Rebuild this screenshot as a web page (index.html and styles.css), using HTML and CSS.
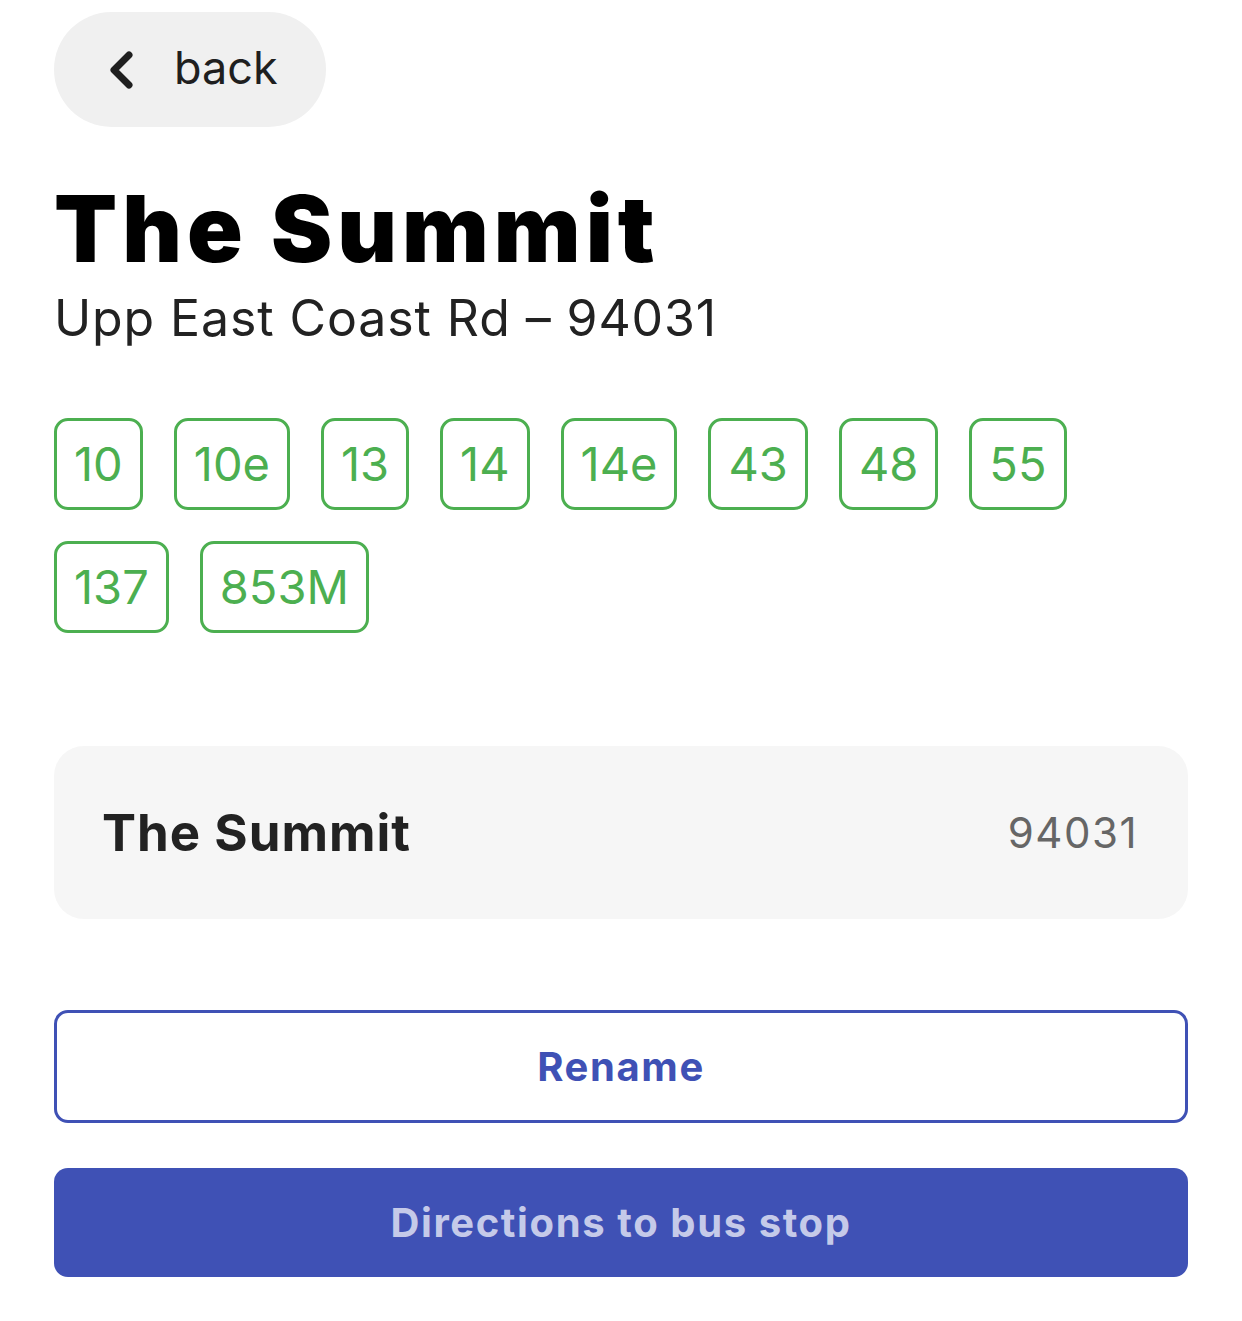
FILE: index.html
```html
<!DOCTYPE html>
<html lang="en">
<head>
<meta charset="utf-8">
<title>The Summit</title>
<link rel="stylesheet" href="styles.css">
</head>
<body>
<main class="page">
  <button class="back">
    <svg class="back-icon" width="26" height="38" viewBox="0 0 26 38" aria-hidden="true">
      <path d="M21 4 L6 19 L21 34" fill="none" stroke="#1f1f1f" stroke-width="7" stroke-linecap="round" stroke-linejoin="round"/>
    </svg>
    <span class="back-label">back</span>
  </button>

  <h1 class="title">The Summit</h1>
  <p class="subtitle">Upp East Coast Rd – 94031</p>

  <ul class="services">
    <li class="chip">10</li>
    <li class="chip">10e</li>
    <li class="chip">13</li>
    <li class="chip">14</li>
    <li class="chip">14e</li>
    <li class="chip">43</li>
    <li class="chip">48</li>
    <li class="chip">55</li>
    <li class="chip">137</li>
    <li class="chip">853M</li>
  </ul>

  <section class="card">
    <span class="card-name">The Summit</span>
    <span class="card-code">94031</span>
  </section>

  <button class="btn btn-outline">Rename</button>
  <button class="btn btn-solid">Directions to bus stop</button>
</main>
</body>
</html>
```

FILE: styles.css
```css
* { box-sizing: border-box; }

html, body {
  margin: 0;
  padding: 0;
  background: #ffffff;
}

body {
  font-family: Inter, "Noto Sans", "Liberation Sans", sans-serif;
  color: #222222;
}

.page {
  padding: 12px 54px 40px;
  display: flex;
  flex-direction: column;
  align-items: stretch;
}

.back {
  align-self: flex-start;
  display: flex;
  align-items: center;
  gap: 40px;
  height: 115px;
  width: 272px;
  padding: 0 0 0 54px;
  border: none;
  border-radius: 58px;
  background: #f0f0f0;
  font-family: inherit;
  cursor: pointer;
}

.back-icon { display: block; }

.back-label {
  font-size: 45px;
  font-weight: 400;
  color: #1f1f1f;
  line-height: 1;
  margin-top: -4px;
}

.title {
  margin: 51px 0 0;
  font-size: 92px;
  line-height: 101px;
  font-weight: 900;
  color: #000000;
  letter-spacing: 5px;
}

.subtitle {
  margin: 9px 0 0;
  font-size: 50px;
  line-height: 60px;
  font-weight: 400;
  color: #222222;
  letter-spacing: 0.9px;
}

.services {
  list-style: none;
  margin: 70px 0 0;
  padding: 0;
  display: flex;
  flex-wrap: wrap;
  gap: 31px;
}

.chip {
  height: 92px;
  padding: 0 17px;
  border: 3px solid #4caf50;
  border-radius: 14px;
  font-size: 47px;
  line-height: 86px;
  color: #4caf50;
}

.card {
  margin-top: 113px;
  height: 173px;
  padding: 0 50px 0 48px;
  display: flex;
  align-items: center;
  justify-content: space-between;
  background: #f6f6f6;
  border-radius: 30px;
}

.card-name {
  font-size: 51px;
  font-weight: 700;
  color: #222222;
  letter-spacing: 1px;
}

.card-code {
  font-size: 42px;
  font-weight: 400;
  color: #666666;
  letter-spacing: 1.5px;
}

.btn {
  display: block;
  width: 100%;
  font-family: inherit;
  font-size: 40px;
  font-weight: 700;
  letter-spacing: 1.6px;
  border-radius: 14px;
  cursor: pointer;
}

.btn-outline {
  margin-top: 91px;
  height: 113px;
  background: #ffffff;
  border: 3px solid #3f51b5;
  color: #3f51b5;
}

.btn-solid {
  margin-top: 45px;
  height: 109px;
  background: #3f51b5;
  border: none;
  color: #c5cae9;
}
```
